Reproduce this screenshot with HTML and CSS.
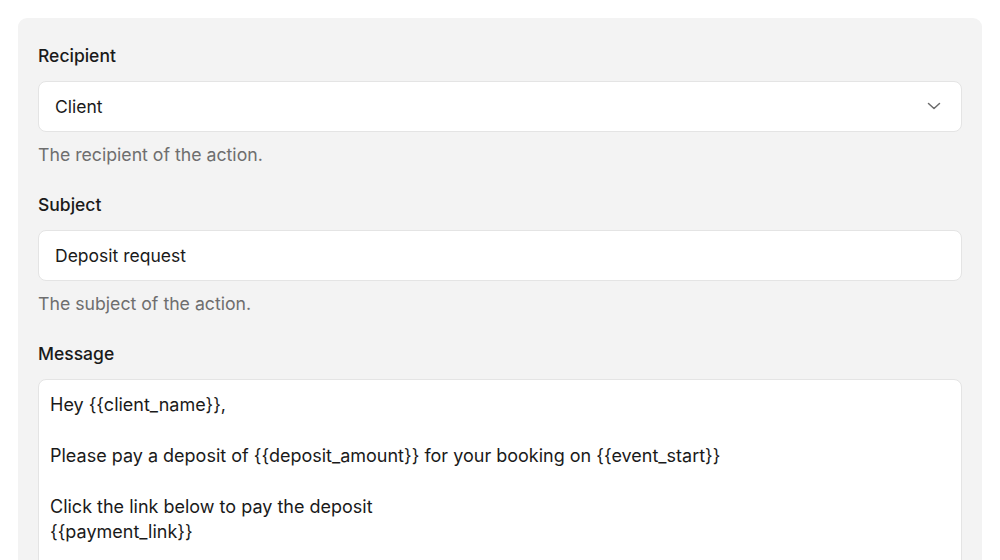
FILE: index.html
```html
<!DOCTYPE html>
<html>
<head>
<meta charset="utf-8">
<link rel="stylesheet" href="styles.css">
</head>
<body>
<div class="card">
  <div class="field">
    <div class="label">Recipient</div>
    <div class="input select">
      <span>Client</span>
      <svg class="chev" width="14" height="14" viewBox="0 0 14 14"><path d="M1.5 4.5 L7 9.5 L12.5 4.5" fill="none" stroke="#6b6b6b" stroke-width="1.5" stroke-linecap="round" stroke-linejoin="round"/></svg>
    </div>
    <div class="help">The recipient of the action.</div>
  </div>
  <div class="field">
    <div class="label">Subject</div>
    <div class="input"><span>Deposit request</span></div>
    <div class="help">The subject of the action.</div>
  </div>
  <div class="field">
    <div class="label">Message</div>
    <div class="textarea">
      <div class="line">Hey {{client_name}},</div>
      <div class="line">&nbsp;</div>
      <div class="line">Please pay a deposit of {{deposit_amount}} for your booking on {{event_start}}</div>
      <div class="line">&nbsp;</div>
      <div class="line">Click the link below to pay the deposit</div>
      <div class="line">{{payment_link}}</div>
    </div>
  </div>
</div>
</body>
</html>
```
FILE: styles.css
```css
html, body {
  margin: 0;
  padding: 0;
  background: #ffffff;
  overflow: hidden;
  height: 560px;
}
body {
  font-family: Inter, "Noto Sans", sans-serif;
  color: #1c1c1c;
  padding: 18px;
}
.card {
  background: #f3f3f3;
  border-radius: 9px;
  padding: 26px 20px 40px 20px;
  display: flex;
  flex-direction: column;
  gap: 26.5px;
}
.field {
  display: flex;
  flex-direction: column;
}
.label {
  font-size: 17.5px;
  font-weight: 500;
  line-height: 24px;
  margin-bottom: 12.5px;
  color: #1a1a1a;
}
.input {
  height: 51px;
  box-sizing: border-box;
  background: #fff;
  border: 1px solid #e4e4e4;
  border-radius: 8px;
  display: flex;
  align-items: center;
  justify-content: space-between;
  padding: 0 20px 0 16px;
  font-size: 17.5px;
  color: #1a1a1a;
}
.chev {
  display: block;
}
.help {
  margin-top: 11px;
  font-size: 17.7px;
  line-height: 24px;
  color: #6e6e6e;
}
.textarea {
  background: #fff;
  border: 1px solid #e4e4e4;
  border-radius: 8px;
  padding: 12px 11px;
  font-size: 18px;
  line-height: 25.5px;
  color: #1a1a1a;
  min-height: 220px;
}
```
